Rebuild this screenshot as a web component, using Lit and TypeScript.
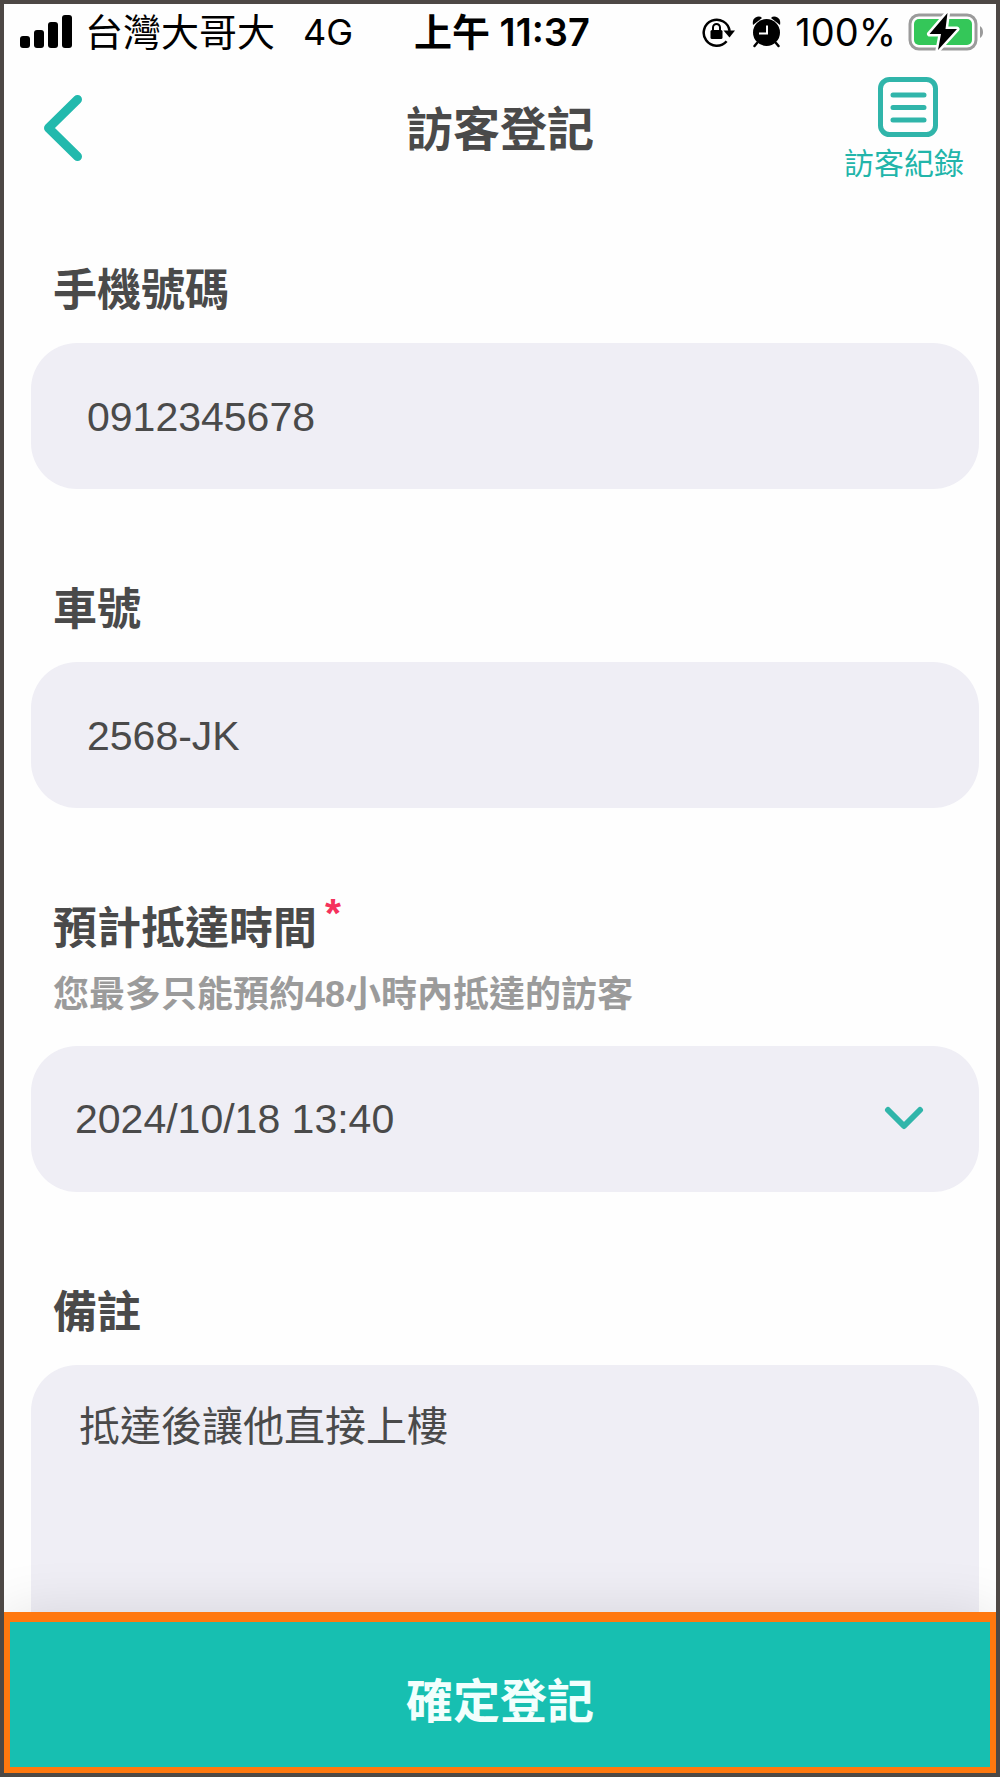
import { LitElement, html, css } from "lit";
import { customElement, state } from "lit/decorators.js";

@customElement("status-bar")
export class StatusBar extends LitElement {
  static styles = css`
    :host {
      display: block;
      color: #000;
      font: 400 38px/56px Inter, "Noto Sans CJK TC", sans-serif;
    }
    .bar {
      display: grid;
      grid-template-columns: 1fr auto 1fr;
      height: 56px;
      padding: 0 12px 0 16px;
    }
    .side {
      display: flex;
      align-items: center;
      white-space: nowrap;
    }
    .carrier {
      margin: 0 28px 0 13px;
    }
    .network {
      font-size: 36px;
    }
    .time {
      font-weight: 600;
      white-space: nowrap;
    }
    .end {
      justify-content: flex-end;
    }
    .lock {
      margin-right: 17px;
    }
    .alarm {
      margin-right: 14px;
    }
    .battery {
      margin-left: 12px;
    }
    svg {
      display: block;
      flex: none;
    }
  `;

  render() {
    return html`
      <div class="bar">
        <div class="side">
          <svg width="52" height="34" viewBox="0 0 52 34" aria-hidden="true">
            <rect x="0" y="21" width="10" height="12" rx="3" />
            <rect x="14" y="15" width="10" height="18" rx="3" />
            <rect x="28" y="7" width="10" height="26" rx="3" />
            <rect x="42" y="0" width="10" height="33" rx="3" />
          </svg>
          <span class="carrier">台灣大哥大</span>
          <span class="network">4G</span>
        </div>
        <div class="time">上午 11:37</div>
        <div class="side end">
          <svg class="lock" width="33" height="32" viewBox="0 0 33 32" aria-hidden="true">
            <path d="M24.6 25.2A13 13 0 1 1 27.6 15" fill="none" stroke="#000" stroke-width="2.5" />
            <path d="M21.5 14.5H33L27.5 21.5Z" />
            <rect x="8.5" y="14" width="12" height="9" rx="1.5" />
            <path d="M11 15v-3.500a3.500 3.500 0 0 1 7 0V15" fill="none" stroke="#000" stroke-width="2" />
          </svg>
          <svg class="alarm" width="29" height="32" viewBox="0 0 29 32" aria-hidden="true">
            <circle cx="14.5" cy="16.5" r="13.5" />
            <path d="M1 9Q0 3.500 3.500 1.500Q7.500 -0.500 10 2Z" />
            <path d="M28 9Q29 3.500 25.500 1.500Q21.500 -0.500 19 2Z" />
            <path d="M5 27l-2.500 3M24 27l2.500 3" stroke="#000" stroke-width="2.5" stroke-linecap="round" />
            <path d="M15 9.500v8H7" fill="none" stroke="#fff" stroke-width="2" />
          </svg>
          <span>100%</span>
          <svg class="battery" width="76" height="40" viewBox="0 0 76 40" aria-hidden="true">
            <rect x="2" y="3" width="66" height="34" rx="9" fill="none" stroke="#9b9b9b" stroke-width="3" />
            <rect x="6" y="7" width="58" height="26" rx="5" fill="#34c759" />
            <path d="M72 14q3 2 3 6t-3 6Z" fill="#9b9b9b" />
            <path
              d="M39.500 1L21.500 22H33L30 38L49 17H37.500Z"
              fill="#000"
              stroke="#fff"
              stroke-width="5"
              stroke-linejoin="round"
              paint-order="stroke"
            />
          </svg>
        </div>
      </div>
    `;
  }
}

@customElement("app-root")
export class AppRoot extends LitElement {
  @state() private phone = "0912345678";
  @state() private plate = "2568-JK";
  @state() private note = "抵達後讓他直接上樓";

  static styles = css`
    :host {
      display: block;
      color: #4a4a4a;
      font-family: "Liberation Sans", "Noto Sans CJK TC", sans-serif;
    }
    * {
      box-sizing: border-box;
    }
    .screen {
      display: flex;
      flex-direction: column;
      min-height: 100vh;
      overflow: hidden;
      border: 4px solid #4d4845;
      background: #fefefe;
    }
    button {
      padding: 0;
      border: 0;
      background: none;
      font: inherit;
      color: inherit;
      cursor: pointer;
    }
    svg {
      display: block;
    }
    .header {
      display: grid;
      grid-template-columns: 1fr auto 1fr;
      align-items: start;
      padding: 16px 32px 0;
      margin-bottom: 75px;
    }
    .back {
      justify-self: start;
      margin-top: 18px;
      padding-left: 8px;
    }
    .title {
      margin: 22px 0 0;
      font-size: 47px;
      line-height: 64px;
      font-weight: 700;
    }
    .records {
      justify-self: end;
      display: flex;
      flex-direction: column;
      align-items: center;
      gap: 2px;
      color: #22b5aa;
      font-size: 30px;
      line-height: 48px;
      text-decoration: none;
    }
    .records svg {
      margin-left: 8px;
    }
    .form {
      flex: 1;
      display: flex;
      flex-direction: column;
      gap: 93px;
      padding: 0 17px 0 27px;
    }
    .field {
      display: flex;
      flex-direction: column;
    }
    .label {
      display: flex;
      margin: 0 22px 24px;
      font-size: 44px;
      line-height: 56px;
      font-weight: 700;
    }
    .required {
      margin-left: 8px;
      color: #f5325c;
      font-size: 41px;
      line-height: 24px;
    }
    .hint {
      margin: -10px 22px 27px;
      color: #9b9b9b;
      font-size: 36px;
      line-height: 48px;
      font-weight: 700;
    }
    .control {
      display: block;
      width: 100%;
      height: 146px;
      margin: 0;
      padding: 2px 56px 0;
      border: 0;
      border-radius: 46px;
      outline-color: #17bfb1;
      background: #efeef5;
      color: #4a4a4a;
      font: inherit;
      font-size: 41px;
    }
    .picker {
      position: relative;
    }
    .picker .control {
      appearance: none;
      padding: 0 44px;
    }
    .chevron {
      position: absolute;
      right: 55px;
      top: 60px;
      pointer-events: none;
    }
    .memo {
      flex: 1;
    }
    .memo .control {
      flex: 1;
      min-height: 246px;
      padding: 32px 48px;
      border-radius: 46px 46px 0 0;
      line-height: 60px;
      resize: none;
    }
    .submit {
      position: relative;
      height: 161px;
      padding-top: 14px;
      border: 6px solid #ff780f;
      border-top-width: 10px;
      background: #17bfb1;
      box-shadow: 0 4px 60px rgba(0, 0, 0, 0.12);
      color: #f2fffd;
      font-size: 47px;
      line-height: 64px;
      font-weight: 700;
    }
  `;

  render() {
    return html`
      <div class="screen">
        <status-bar></status-bar>
        <header class="header">
          <button class="back" type="button" aria-label="返回">
            <svg width="42" height="68" viewBox="0 0 42 68" fill="none" stroke="#22b9ad" stroke-width="9" stroke-linecap="round" stroke-linejoin="round">
              <path d="M33.500 5.500L4.500 34L33.500 62.500" />
            </svg>
          </button>
          <h1 class="title">訪客登記</h1>
          <a class="records" href="#records">
            <svg width="62" height="62" viewBox="0 0 62 62" fill="none" stroke="#30b5aa" stroke-width="5" stroke-linecap="round" aria-hidden="true">
              <rect x="3.500" y="3.500" width="55" height="55" rx="9" />
              <path d="M16 19H47M16 31.500H47M16 44H47" />
            </svg>
            訪客紀錄
          </a>
        </header>
        <main class="form">
          <div class="field">
            <label class="label" for="phone">手機號碼</label>
            <input
              class="control"
              id="phone"
              type="tel"
              .value=${this.phone}
              @input=${(e: Event) => (this.phone = (e.target as HTMLInputElement).value)}
            />
          </div>
          <div class="field">
            <label class="label" for="plate">車號</label>
            <input
              class="control"
              id="plate"
              type="text"
              .value=${this.plate}
              @input=${(e: Event) => (this.plate = (e.target as HTMLInputElement).value)}
            />
          </div>
          <div class="field">
            <label class="label" for="arrival">預計抵達時間<span class="required">*</span></label>
            <div class="hint" id="arrival-hint">您最多只能預約48小時內抵達的訪客</div>
            <div class="picker">
              <select class="control" id="arrival" aria-describedby="arrival-hint" required>
                <option>2024/10/18 13:40</option>
              </select>
              <svg class="chevron" width="40" height="24" viewBox="0 0 40 24" fill="none" stroke="#30b5aa" stroke-width="6" stroke-linecap="round" stroke-linejoin="round" aria-hidden="true">
                <path d="M4 4L20 20L36 4" />
              </svg>
            </div>
          </div>
          <div class="field memo">
            <label class="label" for="note">備註</label>
            <textarea
              class="control"
              id="note"
              .value=${this.note}
              @input=${(e: Event) => (this.note = (e.target as HTMLTextAreaElement).value)}
            ></textarea>
          </div>
        </main>
        <button class="submit" type="submit">確定登記</button>
      </div>
    `;
  }
}
